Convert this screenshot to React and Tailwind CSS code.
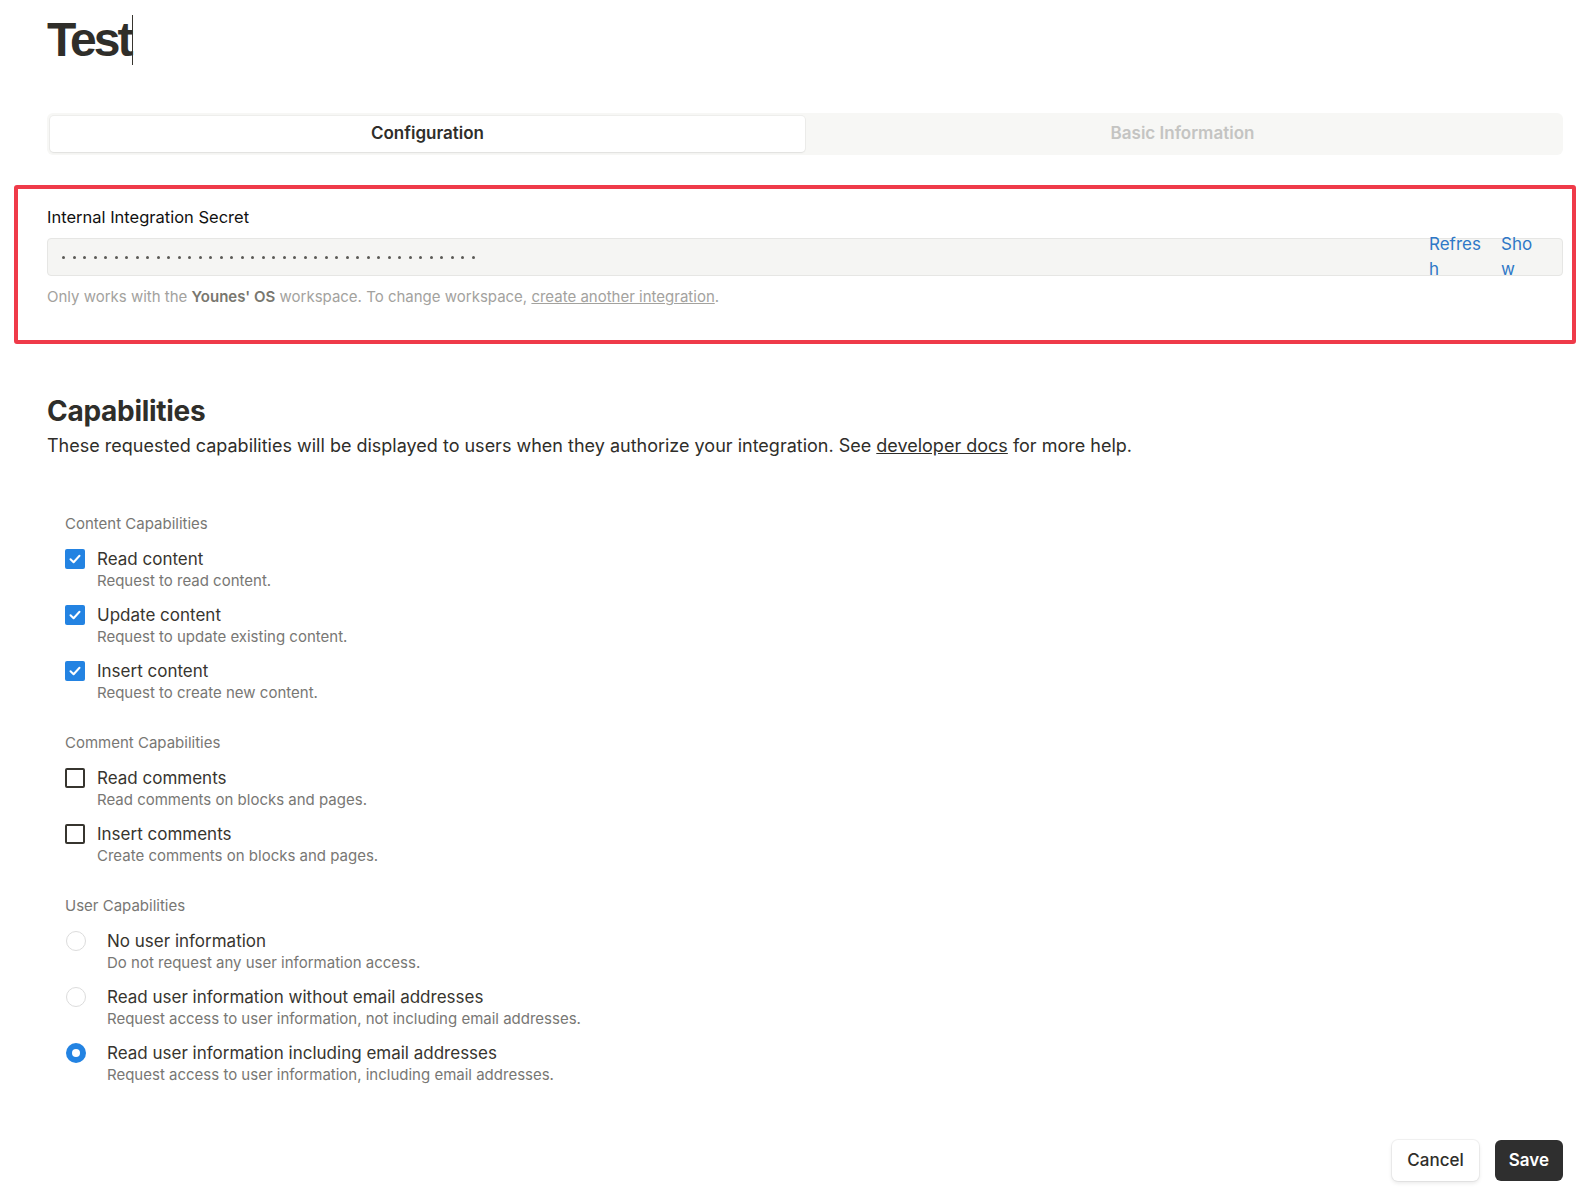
import { useState } from "react";

const font = { fontFamily: 'Inter, "Liberation Sans", Arial, sans-serif' };
const titleFont = { fontFamily: '"Liberation Sans", Arial, sans-serif' };

const CheckBox = ({ checked }) =>
  checked ? (
    <div className="w-[20px] h-[20px] rounded-[2px] bg-[#2383e2] flex items-center justify-center shrink-0">
      <svg width="14" height="14" viewBox="0 0 14 14" fill="none">
        <path d="M2.5 7.2 L5.6 10.2 L11.5 3.8" stroke="white" strokeWidth="2" strokeLinecap="round" strokeLinejoin="round" />
      </svg>
    </div>
  ) : (
    <div className="w-[20px] h-[20px] rounded-[2px] border-2 border-[#37352f] shrink-0" />
  );

const Radio = ({ checked }) =>
  checked ? (
    <div className="w-[20px] h-[20px] rounded-full bg-[#2383e2] flex items-center justify-center shrink-0">
      <div className="w-[8px] h-[8px] rounded-full bg-white" />
    </div>
  ) : (
    <div className="w-[20px] h-[20px] rounded-full border border-[#dcdcdc] shrink-0" />
  );

const Option = ({ control, gap, title, desc }) => (
  <div className="flex">
    <div className={`h-[24px] flex items-center ${gap}`}>{control}</div>
    <div>
      <div className="text-[17px] leading-[24px] text-[#37352f]">{title}</div>
      <div className="text-[15px] leading-[20px] text-[#787774]">{desc}</div>
    </div>
  </div>
);

const GroupLabel = ({ children, className }) => (
  <div className={`text-[15px] leading-[20px] text-[#787774] ${className}`}>{children}</div>
);

const App = () => {
  const [tab, setTab] = useState("config");
  const [content, setContent] = useState({ read: true, update: true, insert: true });
  const [user, setUser] = useState("email");

  return (
    <div className="bg-white pl-[47px] pr-[19px] pt-[15px] pb-[20px] text-[#37352f]" style={font}>
      {/* title */}
      <div className="flex items-center h-[50px]" style={titleFont}>
        <h1 className="text-[48px] leading-[50px] font-bold tracking-[-0.06em] text-[#2f2e2a]">Test</h1>
        <div className="w-[1.5px] h-[50px] bg-[#37352f] ml-[1px]" />
      </div>

      {/* tabs */}
      <div className="mt-[48px] h-[42px] bg-[#f7f7f5] rounded-md p-[3px] flex">
        <button
          onClick={() => setTab("config")}
          className="flex-1 rounded-[4px] bg-white shadow-[0_0_0_1px_rgba(15,15,15,0.04),0_1px_2px_rgba(15,15,15,0.06)] text-[17px] font-semibold text-[#2f2e2a]"
        >
          Configuration
        </button>
        <button onClick={() => setTab("basic")} className="flex-1 text-[17px] font-semibold text-[#c4c4c2]">
          Basic Information
        </button>
      </div>

      {/* secret */}
      <div className="mt-[30px] -ml-[33px] -mr-[13px] border-4 border-[#ef3a49] rounded-[3px] pl-[29px] pr-[9px] pt-[18px] pb-[33px]">
        <div className="text-[16.5px] leading-[20px] text-[#111]">Internal Integration Secret</div>
        <div className="mt-[11px] h-[38px] bg-[#f5f5f3] border border-[#e6e6e4] rounded-[4px] flex items-start pl-[14px]">
          <div className="flex-1 h-full flex items-center gap-[7.5px]">
            {Array.from({ length: 40 }).map((_, i) => (
              <span key={i} className="w-[3px] h-[3px] rounded-full bg-[#5a5955]" />
            ))}
          </div>
          <div className="flex -mt-[7px] pr-[27px] gap-[18px] text-[17px] leading-[25px] text-[#2e78c7]">
            <button className="w-[54px] text-left break-all">Refresh</button>
            <button className="w-[34px] text-left break-all">Show</button>
          </div>
        </div>
        <div className="mt-[11px] text-[15px] leading-[20px] text-[#a3a29e]">
          Only works with the <span className="font-semibold text-[#78776f]">Younes' OS</span> workspace. To change
          workspace, <span className="underline">create another integration</span>.
        </div>
      </div>

      {/* capabilities */}
      <h2 className="mt-[49px] text-[28px] leading-[36px] font-bold tracking-[-0.01em] text-[#2f2e2a]">Capabilities</h2>
      <p className="mt-[4px] text-[18px] leading-[26px] text-[#2f2e2a]">
        These requested capabilities will be displayed to users when they authorize your integration. See{" "}
        <span className="underline">developer docs</span> for more help.
      </p>

      <div className="pl-[18px]">
        <GroupLabel className="mt-[55px]">Content Capabilities</GroupLabel>
        <div className="mt-[13px] flex flex-col gap-[12px]">
          {[
            ["read", "Read content", "Request to read content."],
            ["update", "Update content", "Request to update existing content."],
            ["insert", "Insert content", "Request to create new content."],
          ].map(([k, t, d]) => (
            <div key={k} onClick={() => setContent({ ...content, [k]: !content[k] })}>
              <Option control={<CheckBox checked={content[k]} />} gap="mr-[12px]" title={t} desc={d} />
            </div>
          ))}
        </div>

        <GroupLabel className="mt-[30px]">Comment Capabilities</GroupLabel>
        <div className="mt-[13px] flex flex-col gap-[12px]">
          <Option control={<CheckBox checked={false} />} gap="mr-[12px]" title="Read comments" desc="Read comments on blocks and pages." />
          <Option control={<CheckBox checked={false} />} gap="mr-[12px]" title="Insert comments" desc="Create comments on blocks and pages." />
        </div>

        <GroupLabel className="mt-[30px]">User Capabilities</GroupLabel>
        <div className="mt-[13px] flex flex-col gap-[12px]">
          {[
            ["none", "No user information", "Do not request any user information access."],
            ["noemail", "Read user information without email addresses", "Request access to user information, not including email addresses."],
            ["email", "Read user information including email addresses", "Request access to user information, including email addresses."],
          ].map(([k, t, d]) => (
            <div key={k} onClick={() => setUser(k)} className="pl-[1px]">
              <Option control={<Radio checked={user === k} />} gap="mr-[21px]" title={t} desc={d} />
            </div>
          ))}
        </div>
      </div>

      {/* footer */}
      <div className="mt-[55px] flex justify-end gap-[16px]">
        <button className="h-[41px] px-[15px] rounded-[6px] bg-white text-[17px] font-medium text-[#2f2e2a] shadow-[0_0_0_1px_rgba(15,15,15,0.05),0_2px_4px_rgba(15,15,15,0.1)]">
          Cancel
        </button>
        <button className="h-[41px] px-[14px] rounded-[6px] bg-[#2f2f2f] text-[17px] font-semibold text-white">Save</button>
      </div>
    </div>
  );
};

export default App;
